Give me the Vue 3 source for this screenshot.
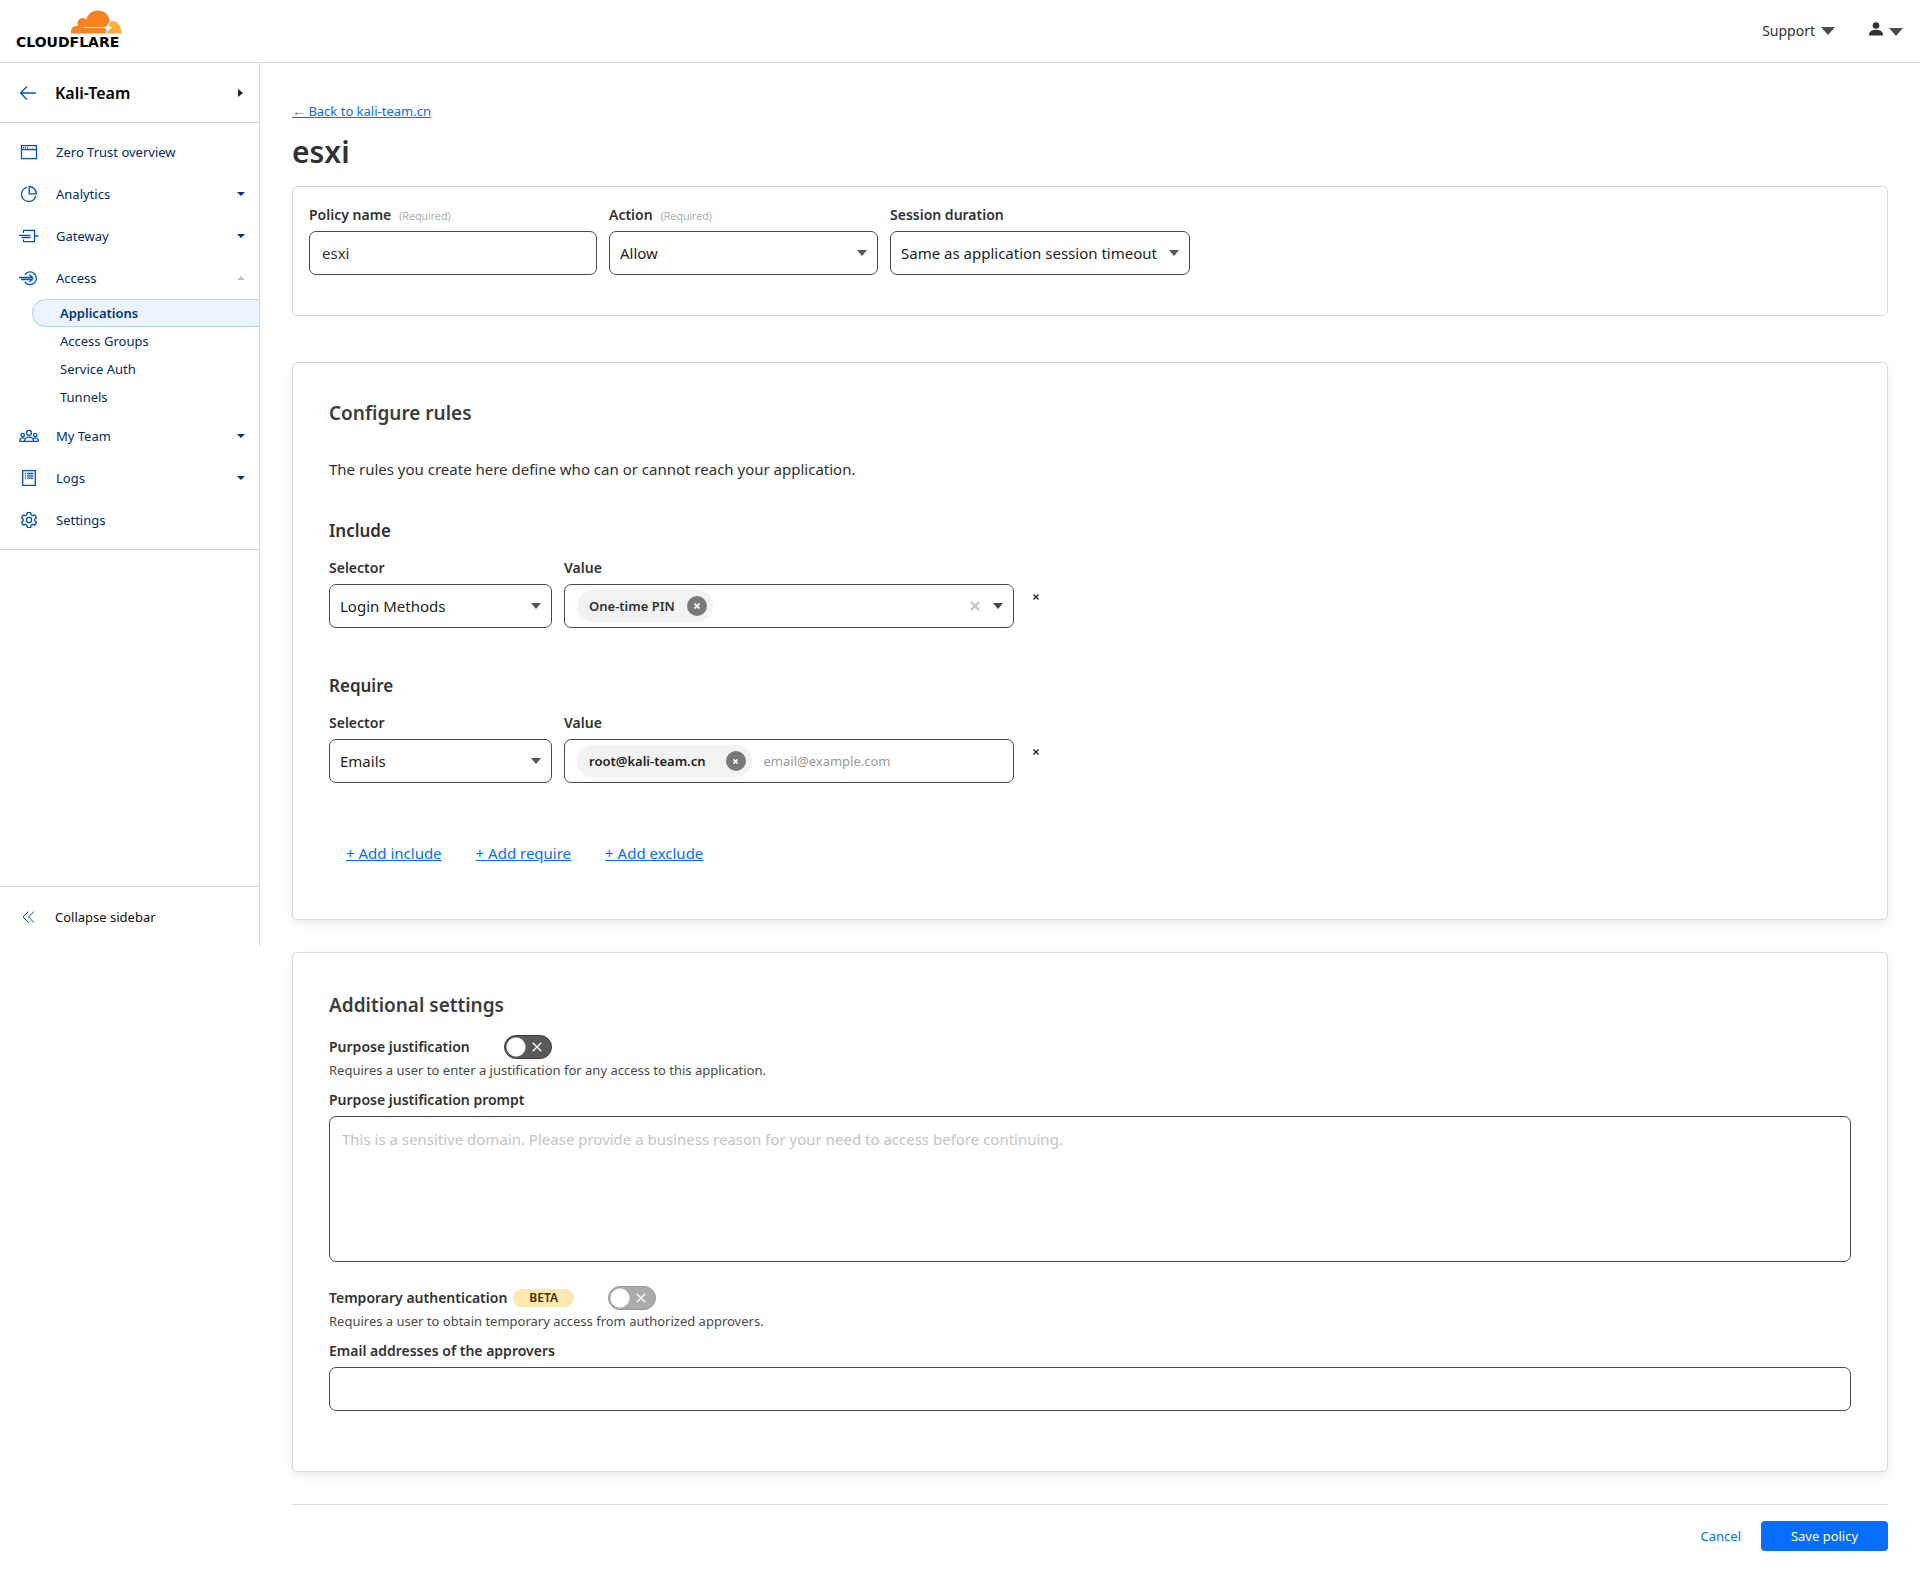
<script setup>
import { ref } from 'vue'

const navTop = [
  { label: 'Zero Trust overview', icon: 'window' },
  { label: 'Analytics', icon: 'pie', caret: 'down' },
  { label: 'Gateway', icon: 'gateway', caret: 'down' },
  {
    label: 'Access',
    icon: 'access',
    caret: 'up',
    children: ['Applications', 'Access Groups', 'Service Auth', 'Tunnels'],
  },
  { label: 'My Team', icon: 'team', caret: 'down' },
  { label: 'Logs', icon: 'logs', caret: 'down' },
  { label: 'Settings', icon: 'gear' },
]
const activeChild = 'Applications'

const policyName = ref('esxi')
const justify = ref(false)
const temporary = ref(false)
const prompt = ref('')
const approvers = ref('')
</script>

<template>
  <div class="app">
    <header class="topbar">
      <a class="logo" href="#" aria-label="Cloudflare">
        <svg class="cloud" viewBox="0 0 52 24" width="52" height="24" aria-hidden="true">
          <path fill="#f6821f" d="M1 23.500C0.300 18.500 3 15.800 7.600 15.700C7 11.500 9 8 12.500 8C14 8 15.300 8.500 16.300 9.500C18 3.500 22.500 0.500 28 0.500C34 0.500 38.500 4.500 39.800 10.500L37.500 17L35 23.500Z" />
          <path fill="#fbad41" d="M40.700 11C47 10.500 51.500 15 51.500 23.500H36.300L38.500 17Z" />
          <path fill="#fff" d="M14 17H34.500Q37.300 16.500 38 13.500Q38.700 16.800 42.500 17.700Q38.700 18.500 38 22Q37.300 18.500 34 18H14Z" />
        </svg>
        <span class="wordmark">CLOUDFLARE</span>
      </a>
      <div class="tools">
        <button type="button" class="tool">
          Support
          <svg width="14" height="8" viewBox="0 0 14 8" aria-hidden="true"><path fill="#4a4a4a" d="M0 0H14L7 8Z" /></svg>
        </button>
        <button type="button" class="tool user" aria-label="Account">
          <svg width="14" height="14" viewBox="0 0 14 14" aria-hidden="true">
            <circle cx="7" cy="3.500" r="3.300" fill="#313131" />
            <path fill="#313131" d="M0 13.500V12Q1 7.700 7 7.700T14 12V13.500Z" />
          </svg>
          <svg width="14" height="8" viewBox="0 0 14 8" aria-hidden="true"><path fill="#4a4a4a" d="M0 0H14L7 8Z" /></svg>
        </button>
      </div>
    </header>

    <div class="body">
      <aside class="sidebar">
        <div class="team">
          <svg class="icon" width="20" height="20" viewBox="0 0 20 20" fill="none" stroke="#0051c3" aria-hidden="true">
            <path stroke-width="1.300" d="M18 10H3M9 3.500L2.500 10L9 16.500" />
          </svg>
          <span class="team-name">Kali-Team</span>
          <svg width="5" height="8" viewBox="0 0 5 8" aria-hidden="true"><path fill="#222" d="M0 0L5 4L0 8Z" /></svg>
        </div>

        <nav class="nav" aria-label="Zero Trust">
          <template v-for="item in navTop" :key="item.label">
            <a class="nav-item" href="#">
              <svg class="icon" width="20" height="20" viewBox="0 0 20 20" fill="none" stroke="#0051c3" stroke-width="1.300" aria-hidden="true">
                <g v-if="item.icon === 'window'">
                  <path d="M2.500 3.700H17.500V16.700H2.500ZM2.500 7.500H17.500" />
                  <path d="M4 5.600H5M6 5.600H7M8 5.600H9" />
                </g>
                <g v-else-if="item.icon === 'pie'">
                  <path d="M8 3.300A7.200 7.200 0 1 0 16.700 12" />
                  <path d="M10.200 2.500V9.800H17.400A7.300 7.300 0 0 0 10.200 2.500Z" />
                </g>
                <g v-else-if="item.icon === 'gateway'">
                  <path d="M4.500 7V4.300H15.500V15.700H4.500V13.500M15.500 10H19.500M0 9.300H11.500M2.500 11.500H11.500" />
                </g>
                <g v-else-if="item.icon === 'access'">
                  <path d="M5.800 6.500A6.400 6.400 0 1 1 5.800 14M0 9.500H14M2 11.500H14M10.500 6.500L14 10.300L10.500 14" />
                </g>
                <g v-else-if="item.icon === 'team'">
                  <circle cx="10" cy="6.800" r="2.500" />
                  <circle cx="3.700" cy="9" r="1.700" />
                  <circle cx="16.300" cy="9" r="1.700" />
                  <path d="M5.500 15.300C5.500 9.800 14.500 9.800 14.500 15.300ZM0.600 15.300C0.600 12 3 11.500 5.600 12.300M19.400 15.300C19.400 12 17 11.500 14.400 12.300M0.300 15.300H19.700" />
                </g>
                <g v-else-if="item.icon === 'logs'">
                  <path d="M3.700 2.700H16.300V17.300H3.700Z" />
                  <path d="M5.800 5.500H7M8 5.500H14.300M5.800 7.800H7M8 7.800H14.300M5.800 10.100H7M8 10.100H14.300" />
                </g>
                <g v-else>
                  <circle cx="10" cy="10" r="2.600" />
                  <path stroke-linejoin="round" d="M8.300 2.600H11.700L12.200 4.900L13.600 5.700L15.800 4.900L17.500 7.800L15.800 9.300V10.700L17.500 12.200L15.800 15.100L13.600 14.300L12.200 15.100L11.700 17.400H8.300L7.800 15.100L6.400 14.300L4.200 15.100L2.500 12.200L4.200 10.700V9.300L2.500 7.800L4.200 4.900L6.400 5.700L7.800 4.900Z" />
                </g>
              </svg>
              <span class="nav-label">{{ item.label }}</span>
              <svg v-if="item.caret" width="8" height="4" viewBox="0 0 8 4" aria-hidden="true">
                <path v-if="item.caret === 'down'" fill="#003682" d="M0 0H8L4 4Z" />
                <path v-else fill="#b9c3d6" d="M0 4H8L4 0Z" />
              </svg>
            </a>
            <div v-if="item.children" class="sub">
              <a
                v-for="child in item.children"
                :key="child"
                class="sub-item"
                :class="{ active: child === activeChild }"
                href="#"
              >{{ child }}</a>
            </div>
          </template>
        </nav>

        <button type="button" class="collapse">
          <svg class="icon" width="20" height="20" viewBox="0 0 20 20" fill="none" stroke="#0051c3" aria-hidden="true">
            <path d="M10.500 4.500L5 10L10.500 15.500M16 4.500L10.500 10L16 15.500" />
          </svg>
          Collapse sidebar
        </button>
      </aside>

      <main class="main">
        <a class="back" href="#">← Back to kali-team.cn</a>
        <h1>esxi</h1>

        <section class="card basics">
          <div class="field name">
            <label for="policy-name">Policy name <small>(Required)</small></label>
            <input id="policy-name" v-model="policyName" class="box" type="text" />
          </div>
          <div class="field action">
            <label for="action">Action <small>(Required)</small></label>
            <div class="select">
              <select id="action" class="box"><option>Allow</option></select>
            </div>
          </div>
          <div class="field session">
            <label for="session">Session duration</label>
            <div class="select">
              <select id="session" class="box"><option>Same as application session timeout</option></select>
            </div>
          </div>
        </section>

        <section class="card rules">
          <h2>Configure rules</h2>
          <p class="intro">The rules you create here define who can or cannot reach your application.</p>

          <h3>Include</h3>
          <div class="rule">
            <div class="field selector">
              <label for="include-selector">Selector</label>
              <div class="select">
                <select id="include-selector" class="box"><option>Login Methods</option></select>
              </div>
            </div>
            <div class="field value">
              <label for="include-value">Value</label>
              <div class="box tags">
                <span class="chip">
                  One-time PIN
                  <button type="button" aria-label="Remove One-time PIN">
                    <svg width="6" height="6" viewBox="0 0 6 6" aria-hidden="true"><path stroke="#fff" stroke-width="1.600" d="M0.500 0.500L5.500 5.500M5.500 0.500L0.500 5.500" /></svg>
                  </button>
                </span>
                <input id="include-value" type="text" />
                <button type="button" class="clear" aria-label="Clear all">
                  <svg width="10" height="10" viewBox="0 0 10 10" aria-hidden="true"><path stroke="#c8c8c8" stroke-width="2.400" d="M0.700 0.700L9.300 9.300M9.300 0.700L0.700 9.300" /></svg>
                </button>
                <svg width="10" height="6" viewBox="0 0 10 6" aria-hidden="true"><path fill="#444" d="M0 0H10L5 6Z" /></svg>
              </div>
            </div>
            <button type="button" class="remove" aria-label="Remove include rule">
              <svg width="6" height="6" viewBox="0 0 6 6" aria-hidden="true"><path stroke="#222" stroke-width="1.300" d="M0.500 0.500L5.500 5.500M5.500 0.500L0.500 5.500" /></svg>
            </button>
          </div>

          <h3>Require</h3>
          <div class="rule">
            <div class="field selector">
              <label for="require-selector">Selector</label>
              <div class="select">
                <select id="require-selector" class="box"><option>Emails</option></select>
              </div>
            </div>
            <div class="field value">
              <label for="require-value">Value</label>
              <div class="box tags">
                <span class="chip email">
                  root@kali-team.cn
                  <button type="button" aria-label="Remove root@kali-team.cn">
                    <svg width="5" height="5" viewBox="0 0 6 6" aria-hidden="true"><path stroke="#fff" stroke-width="1.900" d="M0.500 0.500L5.500 5.500M5.500 0.500L0.500 5.500" /></svg>
                  </button>
                </span>
                <input id="require-value" type="text" placeholder="email@example.com" />
              </div>
            </div>
            <button type="button" class="remove" aria-label="Remove require rule">
              <svg width="6" height="6" viewBox="0 0 6 6" aria-hidden="true"><path stroke="#222" stroke-width="1.300" d="M0.500 0.500L5.500 5.500M5.500 0.500L0.500 5.500" /></svg>
            </button>
          </div>

          <div class="adders">
            <a href="#">+ Add include</a>
            <a href="#">+ Add require</a>
            <a href="#">+ Add exclude</a>
          </div>
        </section>

        <section class="card extra">
          <h2>Additional settings</h2>

          <div class="setting">
            <label for="justify">Purpose justification</label>
            <span class="toggle">
              <input id="justify" v-model="justify" type="checkbox" role="switch" />
              <svg width="10" height="10" viewBox="0 0 10 10" aria-hidden="true"><path stroke="#fff" stroke-width="1.300" d="M0.700 0.700L9.300 9.300M9.300 0.700L0.700 9.300" /></svg>
            </span>
          </div>
          <p class="hint">Requires a user to enter a justification for any access to this application.</p>
          <div class="field">
            <label for="prompt">Purpose justification prompt</label>
            <textarea
              id="prompt"
              v-model="prompt"
              class="box"
              placeholder="This is a sensitive domain. Please provide a business reason for your need to access before continuing."
            ></textarea>
          </div>

          <div class="setting">
            <label for="temporary">Temporary authentication</label>
            <span class="beta">BETA</span>
            <span class="toggle">
              <input id="temporary" v-model="temporary" type="checkbox" role="switch" disabled />
              <svg width="10" height="10" viewBox="0 0 10 10" aria-hidden="true"><path stroke="#fff" stroke-width="1.300" d="M0.700 0.700L9.300 9.300M9.300 0.700L0.700 9.300" /></svg>
            </span>
          </div>
          <p class="hint">Requires a user to obtain temporary access from authorized approvers.</p>
          <div class="field">
            <label for="approvers">Email addresses of the approvers</label>
            <input id="approvers" v-model="approvers" class="box" type="text" />
          </div>
        </section>

        <footer class="actions">
          <button type="button" class="cancel">Cancel</button>
          <button type="button" class="save">Save policy</button>
        </footer>
      </main>
    </div>
  </div>
</template>

<style>
body {
  background: #fff;
}
</style>

<style scoped>
.app,
.app * {
  box-sizing: border-box;
}
.app {
  font-family: "Noto Sans", "Open Sans", sans-serif;
  font-size: 15px;
  line-height: 24px;
  color: #313131;
}
button,
input,
select,
textarea {
  font: inherit;
  color: inherit;
}
button {
  padding: 0;
  border: 0;
  background: none;
  cursor: pointer;
}
svg {
  flex: none;
  display: block;
}

.topbar {
  display: flex;
  justify-content: space-between;
  height: 63px;
  padding: 10px 17px 0 16px;
  border-bottom: 1px solid #d9d9d9;
}
.logo {
  display: flex;
  flex-direction: column;
  width: 106px;
  color: #000;
  text-decoration: none;
}
.cloud {
  align-self: flex-end;
}
.wordmark {
  font: bold 14px/16px "DejaVu Sans", sans-serif;
}
.tools {
  display: flex;
  align-items: flex-start;
  gap: 34px;
  padding-top: 9px;
}
.tool {
  display: flex;
  align-items: center;
  gap: 6px;
  font-size: 14px;
}
.user {
  align-items: flex-end;
  padding-top: 3px;
}

.body {
  display: flex;
  align-items: flex-start;
}
.sidebar {
  display: flex;
  flex-direction: column;
  flex: none;
  width: 260px;
  min-height: 883px;
  border-right: 1px solid #d9d9d9;
  font-size: 13px;
  color: #002b66;
}
.team {
  display: flex;
  align-items: center;
  height: 60px;
  padding: 0 16px 0 18px;
  border-bottom: 1px solid #d9d9d9;
  color: #000;
}
.team-name {
  flex: 1;
  font-size: 16px;
  font-weight: 600;
}
.icon {
  margin-right: 17px;
}
.nav {
  padding: 8px 0;
  border-bottom: 1px solid #d9d9d9;
}
.nav-item {
  display: flex;
  align-items: center;
  height: 42px;
  padding: 0 14px 0 19px;
  color: inherit;
  text-decoration: none;
}
.nav-label {
  flex: 1;
}
.sub {
  display: flex;
  flex-direction: column;
  margin: 0 0 4px 32px;
}
.sub-item {
  height: 28px;
  padding-left: 28px;
  line-height: 28px;
  color: inherit;
  text-decoration: none;
}
.sub-item.active {
  padding-left: 27px;
  border: 1px solid #b3d1ff;
  border-right: 0;
  border-radius: 14px 0 0 14px;
  background: #ebf3ff;
  line-height: 26px;
  font-weight: 600;
  color: #003682;
}
.collapse {
  display: flex;
  align-items: center;
  height: 60px;
  margin-top: auto;
  padding-left: 18px;
  border-top: 1px solid #d9d9d9;
  color: #111;
}

.main {
  flex: 1;
  min-width: 0;
  padding: 36px 32px;
}
a {
  color: #056dff;
}
.back {
  display: block;
  width: max-content;
  font-size: 13px;
}
h1,
h2,
h3,
p {
  margin: 0;
}
h1 {
  margin: 9px 0 14px;
  font-size: 30px;
  line-height: 40px;
  font-weight: 600;
}
.card {
  border: 1px solid #d9d9d9;
  border-radius: 5px;
  background: #fff;
}
.basics {
  display: flex;
  gap: 12px;
  padding: 16px 16px 40px;
}
.rules,
.extra {
  padding: 36px;
  box-shadow: 0 4px 10px rgba(0, 20, 20, 0.08);
}
.rules {
  margin-top: 46px;
}
.extra {
  margin-top: 32px;
  padding-bottom: 60px;
}
.field label,
.setting label {
  font-weight: 600;
  font-size: 14px;
}
.field label {
  display: flex;
  align-items: baseline;
  gap: 8px;
  height: 24px;
  margin-bottom: 4px;
}
small {
  font-size: 11px;
  font-weight: 300;
  color: #8d8d8d;
}
.name {
  width: 288px;
}
.action {
  width: 269px;
}
.session {
  width: 300px;
}
.selector {
  width: 223px;
}
.value {
  width: 450px;
}
.box {
  display: block;
  width: 100%;
  height: 44px;
  padding: 0 12px;
  border: 1px solid #4a4a4a;
  border-radius: 7px;
  outline: 0;
  background: #fff;
}
.select {
  position: relative;
}
.select select {
  appearance: none;
  padding: 0 28px 0 10px;
  color: #1d1d1d;
}
.select::after {
  content: "";
  position: absolute;
  top: 19px;
  right: 11px;
  border: 5px solid transparent;
  border-top: 6px solid #555;
  border-bottom: 0;
  pointer-events: none;
}
h2 {
  font-size: 19px;
  line-height: 28px;
  font-weight: 600;
  color: #3c3c3c;
}
.intro {
  margin: 30px 0 38px;
}
h3 {
  font-size: 17px;
  line-height: 24px;
  font-weight: 600;
}
.rule {
  display: flex;
  align-items: flex-start;
  gap: 12px;
  margin: 13px 0 46px;
}
.remove {
  display: grid;
  place-items: center;
  width: 20px;
  height: 20px;
  margin-top: 31px;
}
.box.tags {
  display: flex;
  align-items: center;
  padding-right: 10px;
}
.tags input {
  flex: 1;
  min-width: 0;
  padding: 0 12px;
  border: 0;
  outline: 0;
  background: none;
  font-size: 13px;
}
.tags input::placeholder {
  color: #999;
}
.chip {
  display: flex;
  align-items: center;
  gap: 12px;
  height: 32px;
  padding: 0 6px 0 12px;
  border-radius: 16px;
  background: #f2f2f2;
  font-size: 13px;
  font-weight: 600;
}
.chip.email {
  gap: 20px;
  color: #1d1d1d;
}
.chip button {
  display: grid;
  place-items: center;
  width: 20px;
  height: 20px;
  border-radius: 10px;
  background: #797979;
}
.clear {
  margin-right: 13px;
}
.adders {
  display: flex;
  gap: 34px;
  padding: 12px 17px 18px;
}
.setting {
  display: flex;
  align-items: center;
  height: 24px;
}
.extra h2 {
  margin: 2px 0 16px;
}
.toggle {
  position: relative;
  width: 48px;
  height: 24px;
  margin-left: 34px;
}
.toggle input {
  appearance: none;
  display: block;
  width: 48px;
  height: 24px;
  margin: 0;
  border: 1px solid #3c3c3c;
  border-radius: 12px;
  background: radial-gradient(circle at 11px 11px, #fff 9px, transparent 10px) #595959;
}
.toggle input:disabled {
  border-color: #999;
  background-color: #ababab;
}
.toggle svg {
  position: absolute;
  top: 7px;
  right: 10px;
  pointer-events: none;
}
.hint {
  margin-bottom: 7px;
  font-size: 13px;
  line-height: 22px;
  color: #4a4a4a;
}
textarea.box {
  height: 146px;
  margin-bottom: 24px;
  padding: 10px 12px;
  resize: none;
}
textarea::placeholder {
  color: #c4c4c4;
}
.beta {
  height: 18px;
  margin-left: 6px;
  padding: 0 16px;
  border-radius: 9px;
  background: #ffe8ad;
  font-size: 12px;
  line-height: 18px;
  font-weight: 600;
  color: #3d2c00;
}
.actions {
  display: flex;
  justify-content: flex-end;
  gap: 20px;
  margin-top: 32px;
  padding-top: 16px;
  border-top: 1px solid #d9d9d9;
  font-size: 13px;
}
.cancel {
  color: #056dff;
}
.save {
  width: 127px;
  height: 30px;
  border-radius: 4px;
  background: #056dff;
  color: #fff;
}
</style>
